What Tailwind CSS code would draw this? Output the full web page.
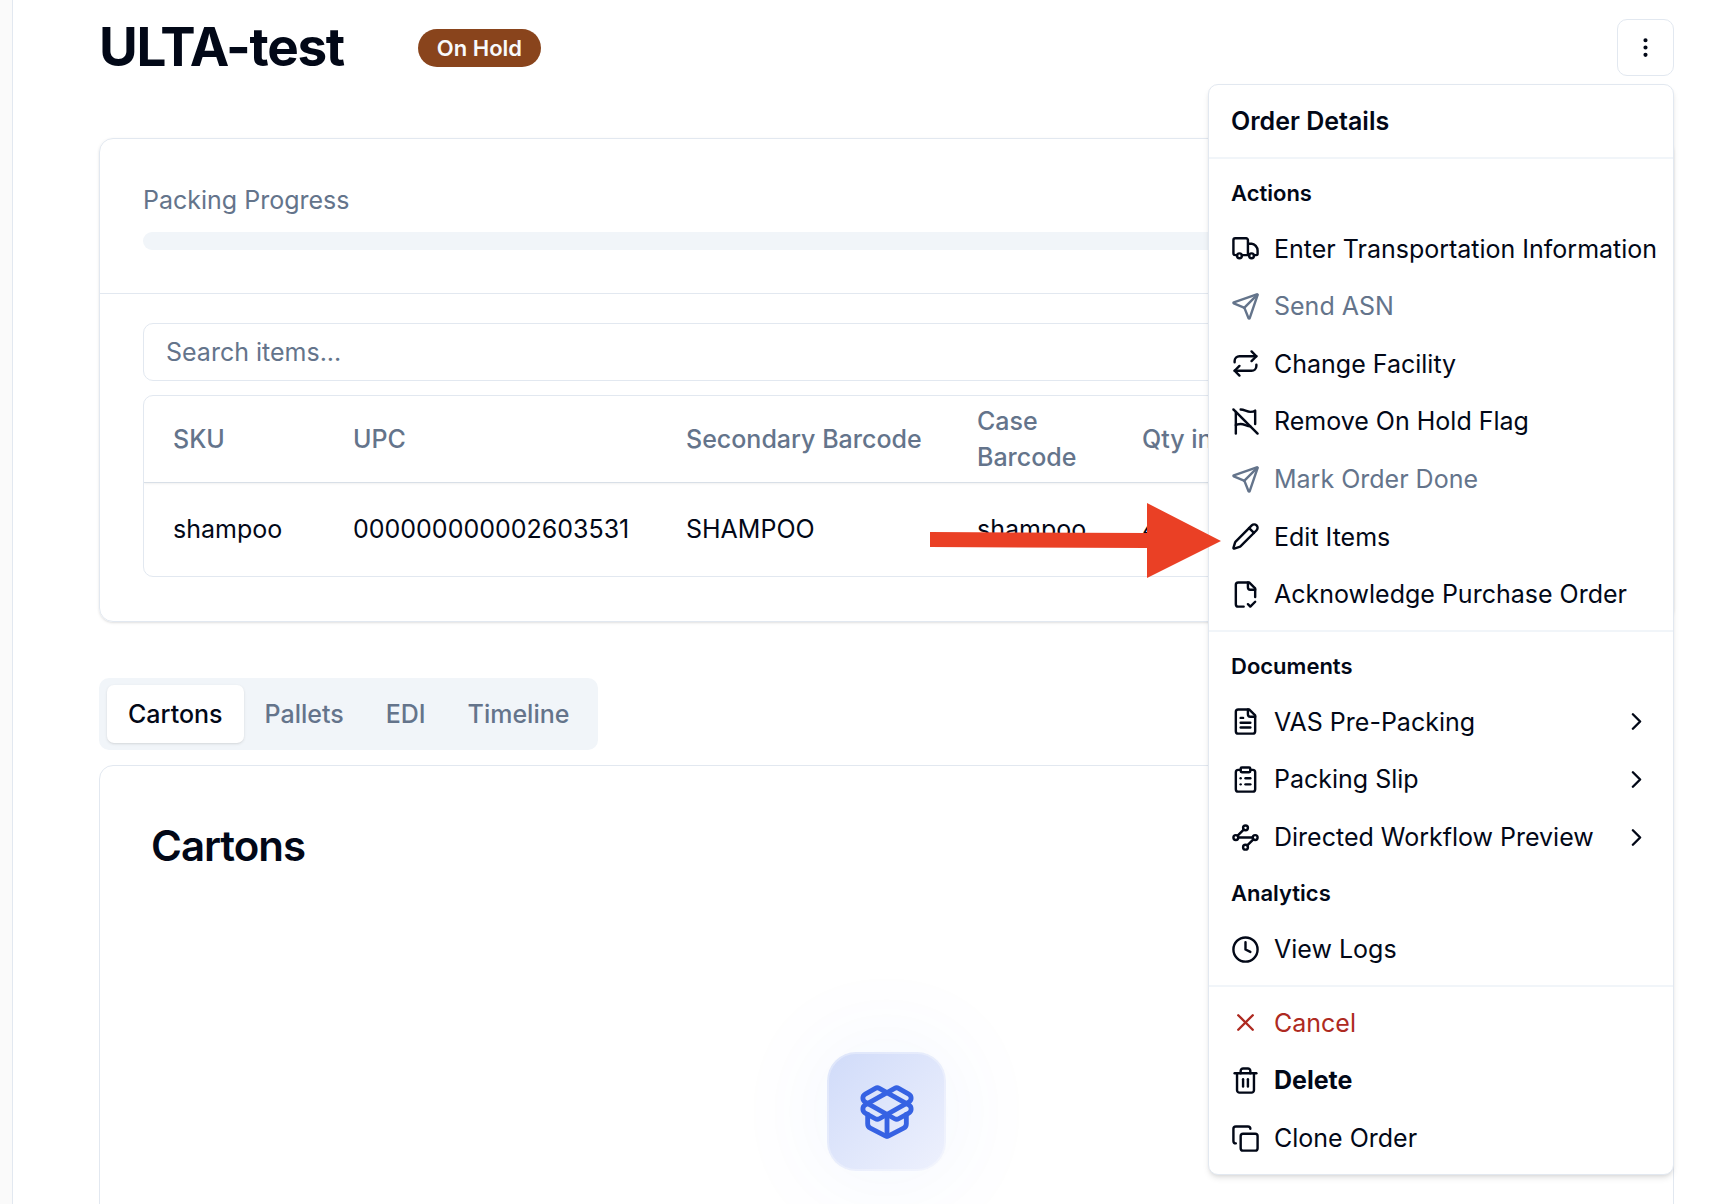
<!DOCTYPE html>
<html lang="en">
<head>
    <meta charset="UTF-8">
    <meta name="viewport" content="width=device-width, initial-scale=1.0">
    <title>ULTA-test</title>
    <script src="https://cdn.jsdelivr.net/npm/@tailwindcss/browser@4"></script>
    <style>
        body {
            font-family: 'Inter', sans-serif;
        }
    </style>
</head>
<body class="bg-white text-[#020817] text-[25px] leading-[36px]">

<!-- Icons -->
<svg class="hidden" xmlns="http://www.w3.org/2000/svg">
    <symbol id="truck" viewBox="0 0 24 24">
        <path d="M14 17.500V5a1.500 1.500 0 0 0-1.500-1.500h-9A1.500 1.500 0 0 0 2 5v11a1.500 1.500 0 0 0 1.500 1.500H5M9 17.500h6M14 8h3.200C19.500 8 22 11 22 13.500v3a1 1 0 0 1-1 1h-2"/>
        <circle cx="7" cy="18" r="2"/><circle cx="17" cy="18" r="2"/>
    </symbol>
    <symbol id="send" viewBox="0 0 24 24">
        <path d="M14.536 21.686a.5.5 0 0 0 .937-.024l6.500-19a.496.496 0 0 0-.635-.635l-19 6.500a.5.5 0 0 0-.024.937l7.930 3.180a2 2 0 0 1 1.112 1.110z"/><path d="m21.854 2.147-10.940 10.939"/>
    </symbol>
    <symbol id="repeat" viewBox="0 0 24 24">
        <path d="m17 2 4 4-4 4"/><path d="M3 11v-1a4 4 0 0 1 4-4h14"/><path d="m7 22-4-4 4-4"/><path d="M21 13v1a4 4 0 0 1-4 4H3"/>
    </symbol>
    <symbol id="flag-off" viewBox="0 0 24 24">
        <path d="M8 2c3 0 5 2 8 2s4-1 4-1v11"/><path d="M4 22V4"/><path d="M4 15s1-1 4-1 5 2 8 2"/><path d="m2 2 20 20"/>
    </symbol>
    <symbol id="pencil" viewBox="0 0 24 24">
        <path d="M21.174 6.812a1 1 0 0 0-3.986-3.987L3.842 16.174a2 2 0 0 0-.5.830l-1.321 4.352a.5.5 0 0 0 .623.622l4.353-1.320a2 2 0 0 0 .830-.497z"/><path d="m15 5 4 4"/>
    </symbol>
    <symbol id="file-check" viewBox="0 0 24 24">
        <path d="M10.500 22H6a2 2 0 0 1-2-2V4a2 2 0 0 1 2-2h9l5 5v7"/><path d="M14 2v4a2 2 0 0 0 2 2h4"/><path d="m14 20 2 2 4-4"/>
    </symbol>
    <symbol id="file-text" viewBox="0 0 24 24">
        <path d="M15 2H6a2 2 0 0 0-2 2v16a2 2 0 0 0 2 2h12a2 2 0 0 0 2-2V7Z"/><path d="M14 2v4a2 2 0 0 0 2 2h4"/><path d="M10 9H8"/><path d="M16 13H8"/><path d="M16 17H8"/>
    </symbol>
    <symbol id="clipboard-list" viewBox="0 0 24 24">
        <rect width="8" height="4" x="8" y="2" rx="1" ry="1"/><path d="M16 4h2a2 2 0 0 1 2 2v14a2 2 0 0 1-2 2H6a2 2 0 0 1-2-2V6a2 2 0 0 1 2-2h2"/><path d="M12 11h4"/><path d="M12 16h4"/><path d="M8 11h.01"/><path d="M8 16h.01"/>
    </symbol>
    <symbol id="waypoints" viewBox="0 0 24 24">
        <circle cx="12" cy="4" r="2"/><path d="m10.500 5.500-5 5"/><circle cx="4" cy="12" r="2"/><path d="M6 12h12"/><circle cx="20" cy="12" r="2"/><path d="m13.500 18.500 5-5"/><circle cx="12" cy="20" r="2"/>
    </symbol>
    <symbol id="clock" viewBox="0 0 24 24">
        <circle cx="12" cy="12" r="10"/><path d="M12 6v6l4 2"/>
    </symbol>
    <symbol id="x" viewBox="0 0 24 24">
        <path d="M18 6 6 18"/><path d="m6 6 12 12"/>
    </symbol>
    <symbol id="trash" viewBox="0 0 24 24">
        <path d="M3 6h18"/><path d="M19 6v14c0 1-1 2-2 2H7c-1 0-2-1-2-2V6"/><path d="M8 6V4c0-1 1-2 2-2h4c1 0 2 1 2 2v2"/><path d="M10 11v6"/><path d="M14 11v6"/>
    </symbol>
    <symbol id="copy" viewBox="0 0 24 24">
        <rect width="14" height="14" x="8" y="8" rx="2" ry="2"/><path d="M4 16c-1.100 0-2-.9-2-2V4c0-1.100.9-2 2-2h10c1.100 0 2 .9 2 2"/>
    </symbol>
    <symbol id="chevron-right" viewBox="0 0 24 24">
        <path d="m9 18 6-6-6-6"/>
    </symbol>
    <symbol id="package-open" viewBox="0 0 24 24">
        <path d="M12 22v-9"/><path d="M15.170 2.210a1.670 1.670 0 0 1 1.630 0L21 4.570a1.930 1.930 0 0 1 0 3.360L8.820 14.790a1.655 1.655 0 0 1-1.640 0L3 12.430a1.930 1.930 0 0 1 0-3.360z"/><path d="M20 13v3.870a2.060 2.060 0 0 1-1.110 1.830l-6 3.080a1.930 1.930 0 0 1-1.780 0l-6-3.080A2.060 2.060 0 0 1 4 16.870V13"/><path d="M21 12.430a1.930 1.930 0 0 0 0-3.360L8.830 2.200a1.640 1.640 0 0 0-1.630 0L3 4.570a1.930 1.930 0 0 0 0 3.360l12.180 6.860a1.636 1.636 0 0 0 1.630 0z"/>
    </symbol>
</svg>

<div class="flex h-screen overflow-hidden">
    <div class="w-[13px] shrink-0 border-r border-slate-200 bg-[#fafafa]"></div>

    <main class="relative min-w-0 flex-1 pt-[19px] pr-12 pl-[86px]">
        <header class="flex items-center">
            <h1 class="text-[53px] leading-[57px] font-bold tracking-tight">ULTA-test</h1>
            <span class="ml-[74px] rounded-full bg-[#89441c] px-[19px] text-[22px] leading-[38px] font-semibold text-slate-50">On Hold</span>
            <button type="button" aria-label="Order menu" class="ml-auto flex size-[57px] items-center justify-center rounded-[10px] border border-slate-200 bg-white">
                <svg class="size-[25px] fill-current stroke-current stroke-2" viewBox="0 0 24 24"><circle cx="12" cy="12" r="1"/><circle cx="12" cy="5" r="1"/><circle cx="12" cy="19" r="1"/></svg>
            </button>
        </header>

        <!-- Packing progress and order items -->
        <section class="mt-[62px] rounded-[14px] border border-slate-200 shadow-sm">
            <div class="border-b border-slate-200 px-[43px] py-[43px]">
                <p class="text-[#64748b]">Packing Progress</p>
                <div role="progressbar" aria-valuenow="0" aria-label="Packing Progress" class="mt-[14px] h-[18px] rounded-full bg-slate-100"></div>
            </div>
            <div class="px-[43px] pt-[29px] pb-11">
                <input type="text" placeholder="Search items..." aria-label="Search items" class="block h-[58px] w-full rounded-[10px] border border-slate-200 px-[22px] placeholder:text-[#64748b]">
                <div class="mt-[14px] overflow-hidden rounded-[10px] border border-slate-200">
                    <table class="w-full table-fixed text-left">
                        <thead class="text-[#64748b] shadow-sm">
                        <tr class="h-[86px] border-b border-[#d8dfe7]">
                            <th class="w-[180px] pl-[29px] font-medium">SKU</th>
                            <th class="w-[333px] pl-[29px] font-medium">UPC</th>
                            <th class="w-[291px] pl-[29px] font-medium">Secondary Barcode</th>
                            <th class="w-[165px] pl-[29px] font-medium">Case Barcode</th>
                            <th class="pl-[29px] font-medium">Qty in Case</th>
                        </tr>
                        </thead>
                        <tbody>
                        <tr class="h-[94px]">
                            <td class="pl-[29px]">shampoo</td>
                            <td class="pl-[29px]">000000000002603531</td>
                            <td class="pl-[29px]">SHAMPOO</td>
                            <td class="pl-[29px]">shampoo</td>
                            <td class="pl-[29px]">4</td>
                        </tr>
                        </tbody>
                    </table>
                </div>
            </div>
        </section>

        <div role="tablist" class="mt-14 flex h-[72px] w-fit items-center rounded-[10px] bg-slate-100 px-2 font-medium text-[#64748b]">
            <button type="button" role="tab" aria-selected="true" class="h-[58px] rounded-[7px] bg-white px-[21px] text-[#020817] shadow-sm">Cartons</button>
            <button type="button" role="tab" class="h-[58px] px-[21px]">Pallets</button>
            <button type="button" role="tab" class="h-[58px] px-[21px]">EDI</button>
            <button type="button" role="tab" class="h-[58px] px-[21px]">Timeline</button>
        </div>

        <section class="mt-[15px] h-[600px] rounded-[14px] border border-slate-200 px-[51px] pt-[51px]">
            <h2 class="text-[42px] leading-[58px] font-semibold tracking-tight">Cartons</h2>
            <div class="mt-[177px] flex justify-center">
                <div class="flex size-[119px] items-center justify-center rounded-[29px] border-2 border-white/30 bg-linear-to-br from-[#d0dbf9] to-[#eef1fd] bg-origin-border shadow-[0_0_100px_10px_rgba(37,99,235,0.05)]">
                    <svg class="size-[58px] fill-none stroke-[#3662e3] stroke-2 [stroke-linecap:round] [stroke-linejoin:round]"><use href="#package-open"/></svg>
                </div>
            </div>
        </section>

        <!-- Order menu -->
        <div role="menu" class="absolute top-[84px] right-12 z-10 w-[466px] rounded-[10px] border border-slate-200 bg-white py-[7px] shadow-md [&_svg]:size-[29px] [&_svg]:shrink-0 [&_svg]:fill-none [&_svg]:stroke-current [&_svg]:stroke-2 [&_svg]:[stroke-linecap:round] [&_svg]:[stroke-linejoin:round] [&_button]:flex [&_button]:w-full [&_button]:items-center [&_button]:gap-[14px] [&_button]:px-[22px] [&_button]:text-left [&_button]:whitespace-nowrap [&_hr]:my-[7px] [&_hr]:border-t-2 [&_hr]:border-slate-100 [&_h3]:px-[22px] [&_h3]:text-[22px] [&_h3]:leading-[54px] [&_h3]:font-semibold">
            <h2 class="px-[22px] leading-[58px] font-semibold">Order Details</h2>
            <hr>
            <h3>Actions</h3>
            <div class="grid h-[403px] auto-rows-fr">
                <button type="button" role="menuitem"><svg><use href="#truck"/></svg>Enter Transportation Information</button>
                <button type="button" role="menuitem" class="text-[#64748b]" disabled><svg><use href="#send"/></svg>Send ASN</button>
                <button type="button" role="menuitem"><svg><use href="#repeat"/></svg>Change Facility</button>
                <button type="button" role="menuitem"><svg><use href="#flag-off"/></svg>Remove On Hold Flag</button>
                <button type="button" role="menuitem" class="text-[#64748b]" disabled><svg><use href="#send"/></svg>Mark Order Done</button>
                <button type="button" role="menuitem"><svg><use href="#pencil"/></svg>Edit Items</button>
                <button type="button" role="menuitem"><svg><use href="#file-check"/></svg>Acknowledge Purchase Order</button>
            </div>
            <hr>
            <h3>Documents</h3>
            <div class="grid h-[173px] auto-rows-fr">
                <button type="button" role="menuitem"><svg><use href="#file-text"/></svg>VAS Pre-Packing<svg class="ml-auto"><use href="#chevron-right"/></svg></button>
                <button type="button" role="menuitem"><svg><use href="#clipboard-list"/></svg>Packing Slip<svg class="ml-auto"><use href="#chevron-right"/></svg></button>
                <button type="button" role="menuitem"><svg><use href="#waypoints"/></svg>Directed Workflow Preview<svg class="ml-auto"><use href="#chevron-right"/></svg></button>
            </div>
            <h3>Analytics</h3>
            <button type="button" role="menuitem" class="h-[58px]"><svg><use href="#clock"/></svg>View Logs</button>
            <hr>
            <div class="grid h-[173px] auto-rows-fr">
                <button type="button" role="menuitem" class="text-[#ae2a21]"><svg><use href="#x"/></svg>Cancel</button>
                <button type="button" role="menuitem" class="font-bold"><svg><use href="#trash"/></svg>Delete</button>
                <button type="button" role="menuitem"><svg><use href="#copy"/></svg>Clone Order</button>
            </div>
        </div>

        <!-- Arrow pointing at Edit Items -->
        <svg class="absolute top-[503px] right-[501px] z-20 h-[75px] w-[291px] fill-[#ea4025]" viewBox="0 0 291 75">
            <path d="M0 29 217 30V0L291 38 217 75V45L0 44Z"/>
        </svg>
    </main>
</div>
</body>
</html>
